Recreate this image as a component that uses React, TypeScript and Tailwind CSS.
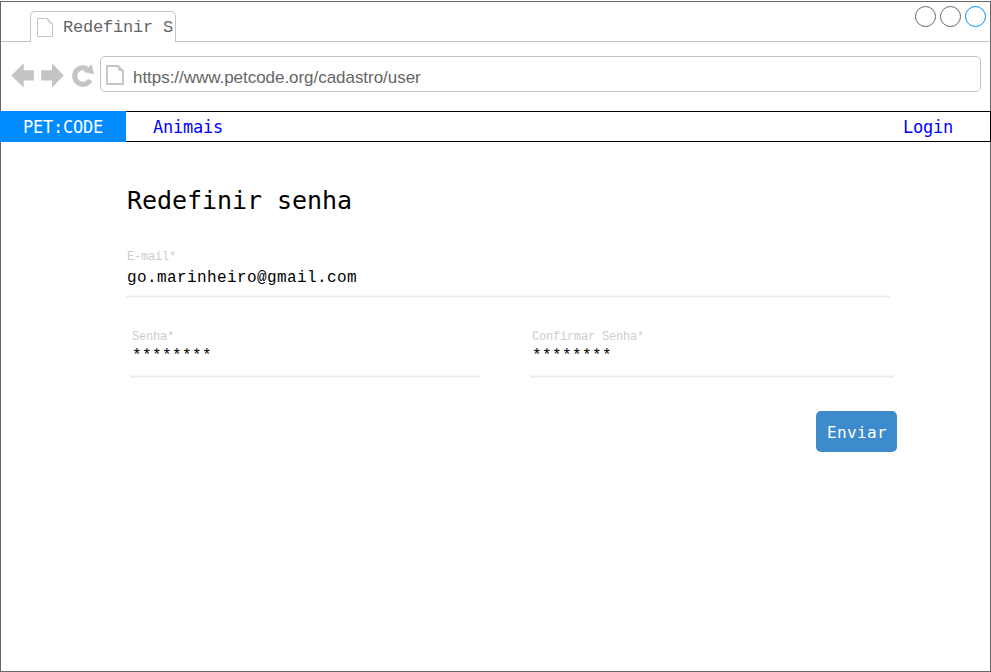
import React from 'react';

function TabPageIcon() {
  return (
    <svg className="mt-[6px] h-[20px] w-[17px] shrink-0" viewBox="0 0 17 20" fill="none" stroke="#c4c4c4" strokeWidth="1">
      <path d="M0.5 0.5H10.5L15.5 5.5V18.5H0.5Z" />
      <path d="M10.5 0.5L11.5 4.5L15.5 5.5" />
    </svg>
  );
}

function AddressPageIcon() {
  return (
    <svg className="mt-[8px] h-[20px] w-[18px] shrink-0" viewBox="0 0 18 20" fill="none" stroke="#c4c4c4" strokeWidth="1.8">
      <path d="M1 1H12L17 6V19H1Z" />
      <path d="M12 1L13 5L17 6" strokeWidth="1.3" />
    </svg>
  );
}

function NavIcons() {
  return (
    <svg className="block h-[26px] w-[84px] shrink-0" viewBox="0 0 84 26" fill="#c4c4c4">
      <path d="M0.3 12.5L12.7 0.3V7.3H22.8V17.5H12.7V24.5Z" />
      <path d="M52.8 12.5L41 0.3V7.3H30.2V17.5H41V24.5Z" />
      <path d="M79.2 17A8.3 8.3 0 1 1 76 5.8" fill="none" stroke="#c4c4c4" strokeWidth="5" />
      <path d="M80.8 1.3L82.8 11.2L72.5 8.9Z" />
    </svg>
  );
}

function Field({
  label,
  value,
  className,
  valueClass,
}: {
  label: string;
  value: string;
  className: string;
  valueClass: string;
}) {
  return (
    <div className={`${className} font-['Liberation_Mono',monospace]`}>
      <div className="h-[49px]">
        <div className="h-[20px] pt-[3px] text-[12px] leading-[16px] tracking-[-0.2px] text-[#cccccc]">{label}</div>
        <div className={`${valueClass} text-[16px] leading-[20px] tracking-[0.4px] text-black`}>{value}</div>
      </div>
      <div className="h-[3px] border-y border-[#f6f6f6] bg-[#ebebeb]" />
    </div>
  );
}

export default function App() {
  return (
    <div className="h-[672px] w-[991px] overflow-hidden bg-white pt-px">
      <div className="h-[671px] border border-[#666666]">
        <header className="flex h-[40px] border-b border-[#c4c4c4]">
          <div className="ml-[29px] mt-[9px] flex h-[31px] w-[146px] shrink-0 overflow-hidden rounded-t-[5px] border border-b-0 border-[#c4c4c4] bg-white pl-[6px]">
            <TabPageIcon />
            <span className="ml-[9px] mt-[6px] whitespace-nowrap font-['Liberation_Mono',monospace] text-[17px] leading-[20px] tracking-[-0.2px] text-[#666666]">
              Redefinir S
            </span>
          </div>
          <div className="ml-auto mr-[4px] mt-[4px] flex gap-[4px]">
            <div className="size-[21px] rounded-full border border-[#666666]" />
            <div className="size-[21px] rounded-full border border-[#666666]" />
            <div className="size-[21px] rounded-full border border-[#008cff]" />
          </div>
        </header>
        <div className="flex h-[69px] items-start pl-[10px] pr-[9px] pt-[14px]">
          <div className="mt-[7px]">
            <NavIcons />
          </div>
          <div className="ml-[5px] flex h-[36px] flex-1 rounded-[5px] border border-[#c4c4c4] pl-[5px]">
            <AddressPageIcon />
            <span className="ml-[9px] mt-[11px] font-['Liberation_Sans',sans-serif] text-[17px] leading-[20px] tracking-[-0.04px] text-[#666666]">
              https://www.petcode.org/cadastro/user
            </span>
          </div>
        </div>
        <nav className="-mx-px flex h-[31px] border border-black font-['DejaVu_Sans_Mono',monospace] text-[17px] leading-[30px] tracking-[-0.23px]">
          <div className="-my-px -ml-px w-[126px] shrink-0 bg-[#008cff] pl-[23px] pt-px text-white">PET:CODE</div>
          <a className="ml-[27px] text-[#0000ff]">Animais</a>
          <a className="ml-auto mr-[37px] text-[#0000ff]">Login</a>
        </nav>
        <main className="pl-[125px] pt-[43px]">
          <h1 className="h-[61px] pl-px font-['DejaVu_Sans_Mono',monospace] text-[25px] leading-[32px] tracking-[-0.05px] text-black">
            Redefinir senha
          </h1>
          <Field className="w-[764px] [&>div:first-child]:pl-px" valueClass="pt-[2px]" label="E-mail*" value="go.marinheiro@gmail.com" />
          <div className="ml-[4px] mt-[28px] flex gap-[50px]">
            <Field className="w-[350px] [&>div:first-child]:pl-[2px]" valueClass="" label="Senha*" value="********" />
            <Field className="w-[364px] [&>div:first-child]:pl-[2px]" valueClass="" label="Confirmar Senha*" value="********" />
          </div>
          <button className="ml-[690px] mt-[33px] block h-[41px] w-[81px] rounded-[5px] bg-[#3d8bcd] pl-px pt-[2px] font-['DejaVu_Sans_Mono',monospace] text-[16px] leading-[39px] tracking-[0.37px] text-white">
            Enviar
          </button>
        </main>
      </div>
    </div>
  );
}
